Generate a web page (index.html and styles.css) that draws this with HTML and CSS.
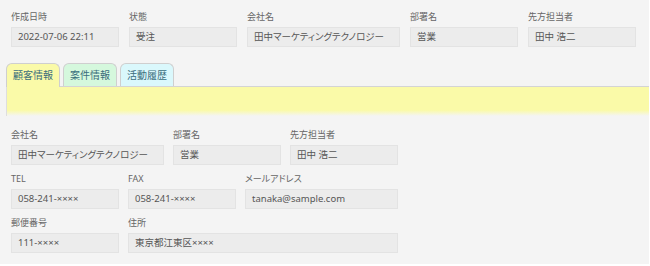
FILE: index.html
```html
<!DOCTYPE html>
<html lang="ja">
<head>
  <meta charset="UTF-8">
  <title>顧客情報</title>
  <link rel="stylesheet" href="styles.css">
</head>
<body>
  <div class="page">

    <div class="row top">
      <div class="field w-s"><label>作成日時</label><div class="input">2022-07-06 22:11</div></div>
      <div class="field w-s"><label>状態</label><div class="input">受注</div></div>
      <div class="field w-m"><label>会社名</label><div class="input">田中マーケティングテクノロジー</div></div>
      <div class="field w-s"><label>部署名</label><div class="input">営業</div></div>
      <div class="field w-s"><label>先方担当者</label><div class="input">田中 浩二</div></div>
    </div>

    <div class="tabs">
      <a class="tab tab-customer active">顧客情報</a>
      <a class="tab tab-deal">案件情報</a>
      <a class="tab tab-activity">活動履歴</a>
    </div>
    <div class="tab-panel"></div>

    <div class="details">
      <div class="row">
        <div class="field w-m"><label>会社名</label><div class="input">田中マーケティングテクノロジー</div></div>
        <div class="field w-s"><label>部署名</label><div class="input">営業</div></div>
        <div class="field w-s"><label>先方担当者</label><div class="input">田中 浩二</div></div>
      </div>
      <div class="row">
        <div class="field w-s"><label>TEL</label><div class="input">058-241-××××</div></div>
        <div class="field w-s"><label>FAX</label><div class="input">058-241-××××</div></div>
        <div class="field w-m"><label>メールアドレス</label><div class="input">tanaka@sample.com</div></div>
      </div>
      <div class="row">
        <div class="field w-s"><label>郵便番号</label><div class="input">111-××××</div></div>
        <div class="field w-l"><label>住所</label><div class="input">東京都江東区××××</div></div>
      </div>
    </div>

  </div>
</body>
</html>
```

FILE: styles.css
```css
body {
  margin: 0;
  background: #ffffff;
  font-family: 'Noto Sans', 'Noto Sans CJK JP', sans-serif;
  font-feature-settings: "palt";
  color: #555;
}

.page {
  width: 649px;
  height: 264px;
  background: #f4f4f4;
  padding-top: 10px;
  box-sizing: border-box;
}

.row {
  display: flex;
  gap: 9px;
  padding-left: 11px;
  margin-bottom: 7px;
}

.row.top {
  gap: 10px;
  margin-bottom: 16px;
}

.field label {
  display: block;
  font-size: 9px;
  line-height: 14px;
  color: #666;
  margin-bottom: 3px;
}

.input {
  height: 20px;
  box-sizing: border-box;
  background: #ececec;
  border: 1px solid #e3e3e3;
  font-size: 9.5px;
  line-height: 18px;
  padding-left: 6px;
  color: #555;
  white-space: nowrap;
}

.w-s { width: 108px; }
.w-m { width: 153px; }
.w-l { width: 270px; }

.tabs {
  display: flex;
  gap: 3px;
  padding-left: 6px;
  height: 23px;
  position: relative;
  z-index: 1;
}

.tab {
  width: 54px;
  box-sizing: border-box;
  border: 1px solid #cfcfcf;
  border-bottom: none;
  border-radius: 6px 6px 0 0;
  font-size: 10px;
  line-height: 22px;
  text-align: center;
  color: #3a6e7c;
  cursor: pointer;
}

.tab-customer { background: #fafaa8; }
.tab-deal { background: #d5f8dd; }
.tab-activity { background: #daf8fc; }

.tab.active {
  height: 24px;
}

.tab-panel {
  margin-left: 6px;
  height: 30px;
  box-sizing: border-box;
  border-top: 1px solid #d4d4d4;
  border-left: 1px solid #dedede;
  background: linear-gradient(#fafaa8 80%, #f4f4f4);
}

.details {
  padding-top: 12px;
}
```
